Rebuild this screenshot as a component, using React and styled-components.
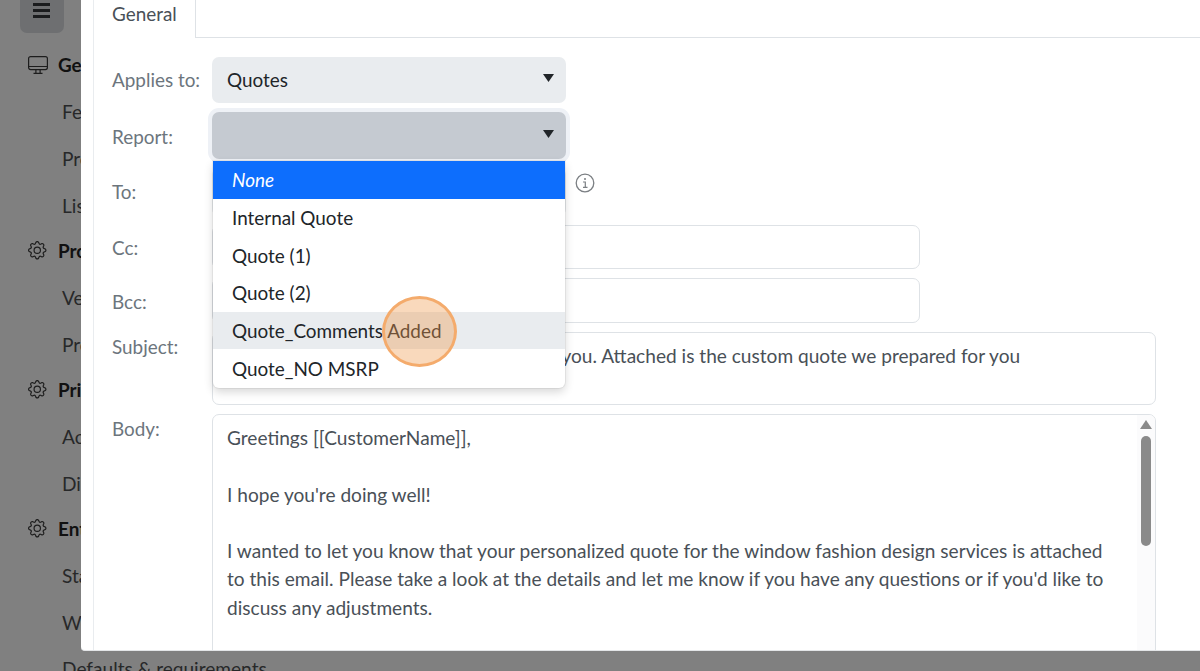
import React from 'react';
import styled, { createGlobalStyle } from 'styled-components';

const Global = createGlobalStyle`
  html, body { margin: 0; padding: 0; height: 671px; overflow: hidden; background: #808080; }
  * { box-sizing: border-box; }
  body { font-family: "Lato", "Open Sans", sans-serif; font-size: 18.9px; line-height: 1; }
`;

const Page = styled.div`
  position: relative;
  width: 1200px;
  height: 671px;
  overflow: hidden;
  background: #808080;
`;

const Sidebar = styled.nav`
  width: 303px;
  height: 671px;
  overflow: hidden;
  display: flex;
  flex-direction: column;
`;

const MenuButton = styled.div`
  width: 44px;
  height: 33px;
  margin-left: 20px;
  margin-bottom: 9px;
  flex: none;
  background: #6e6f71;
  border-radius: 0 0 7px 7px;
  display: flex;
  flex-direction: column;
  gap: 3px;
  padding: 3px 0 0 13px;
`;

const MenuBar = styled.span`
  width: 17px;
  height: 3px;
  background: #1b1c1e;
`;

const GroupRow = styled.div`
  height: 45px;
  flex: none;
  display: flex;
  align-items: center;
  gap: 10px;
  padding: 1px 0 0 28px;
  font-weight: 700;
  color: #111;
  white-space: nowrap;
`;

const IconSlot = styled.span`
  width: 20px;
  height: 20px;
  margin-top: -1px;
  flex: none;
  display: flex;
  align-items: center;
  justify-content: flex-start;
`;

const SubRow = styled.div`
  height: ${p => p.$h || 47}px;
  flex: none;
  display: flex;
  align-items: center;
  padding: 3px 0 0 62px;
  font-size: 19.1px;
  color: #272829;
  white-space: nowrap;
`;

const Modal = styled.section`
  position: absolute;
  left: 81px;
  top: 0;
  width: 1119px;
  height: 651px;
  background: #fff;
  border-radius: 0 0 0 4px;
  padding-left: 12px;
  overflow: hidden;
  border-bottom: 1px solid #e3e5e7;
`;

const Panel = styled.div`
  height: 100%;
  border-left: 1px solid #e9ecef;
  display: flex;
  flex-direction: column;
`;

const TabStrip = styled.div`
  height: 38px;
  flex: none;
  border-bottom: 1px solid #dee2e6;
`;

const Tab = styled.div`
  width: 102px;
  height: 38px;
  background: #fff;
  border-right: 1px solid #dee2e6;
  padding: 4px 0 0 18px;
  color: #495057;
  line-height: 19px;
`;

const Form = styled.div`
  flex: 1;
  min-height: 0;
  padding: 19px 0 0 18px;
  display: flex;
  flex-direction: column;
  gap: 9px;
`;

const Row = styled.div`
  display: flex;
  flex: none;
  height: ${p => p.$h}px;
  align-items: ${p => (p.$top ? 'flex-start' : 'center')};
`;

const BodyRow = styled(Row)`
  flex: 1;
  height: auto;
  min-height: 0;
`;

const Label = styled.label`
  width: 100px;
  flex: none;
  color: #6c757d;
  line-height: 22px;
  padding-top: ${p => p.$pt || 0}px;
`;

const SelectBox = styled.div`
  position: relative;
  width: 354px;
  height: 100%;
  display: flex;
  align-items: center;
  padding-left: 15px;
  background: ${p => (p.$open ? '#c5cad1' : '#e9ecef')};
  border-radius: 7px;
  color: #212529;
  box-shadow: ${p => (p.$open ? '0 0 0 4px #eef1f6' : 'none')};
`;

const Caret = styled.svg`
  position: absolute;
  right: 12px;
  top: 50%;
  margin-top: -6px;
  width: 11px;
  height: 8px;
  fill: #212529;
`;

const Dropdown = styled.ul`
  position: absolute;
  left: 1px;
  right: 1px;
  top: 49px;
  margin: 0;
  padding: 0 0 1px;
  list-style: none;
  background: #fff;
  border-radius: 0 0 6px 6px;
  box-shadow: 0 4px 10px rgba(0, 0, 0, 0.16), 0 0 0 1px rgba(0, 0, 0, 0.05);
  z-index: 2;
  overflow: hidden;
`;

const Option = styled.li`
  height: 37.7px;
  display: flex;
  align-items: center;
  padding: 2px 0 0 19px;
  white-space: nowrap;
  color: ${p => (p.$selected ? '#fff' : '#212529')};
  background: ${p => (p.$selected ? '#0d6efd' : p.$hover ? '#e9ecef' : 'transparent')};
  font-style: ${p => (p.$selected ? 'italic' : 'normal')};
`;

const InfoIcon = styled.svg`
  width: 20px;
  height: 20px;
  margin: -18px 0 0 9px;
  flex: none;
  color: #7b7f83;
`;

const TextInput = styled.div`
  width: 708px;
  height: 100%;
  background: #fff;
  border: 1px solid #dee2e6;
  border-radius: 7px;
`;

const TextArea = styled.div`
  position: relative;
  width: 944px;
  height: ${p => (p.$fill ? '260px' : '100%')};
  background: #fff;
  border: 1px solid #dee2e6;
  border-radius: 7px;
  padding: 9px 14px;
  color: #495057;
  font-size: 19.1px;
  line-height: 28.3px;
  overflow: hidden;
  white-space: pre-line;
`;

const Track = styled.div`
  position: absolute;
  top: 0;
  right: 0;
  bottom: 0;
  width: 18px;
  background: #fbfbfc;
`;

const ThumbArrow = styled.div`
  position: absolute;
  left: 3px;
  top: 5px;
  width: 0;
  height: 0;
  border-left: 6px solid transparent;
  border-right: 6px solid transparent;
  border-bottom: 9px solid #8a8a8a;
`;

const Thumb = styled.div`
  position: absolute;
  left: 4px;
  top: 21px;
  width: 10px;
  height: 110px;
  background: #8a8a8a;
  border-radius: 5px;
`;

const Spotlight = styled.div`
  position: absolute;
  left: 382px;
  top: 296px;
  width: 75px;
  height: 71px;
  border-radius: 50%;
  border: 3px solid #f4ab6c;
  background: rgba(240, 154, 80, 0.38);
  z-index: 3;
`;

const Gear = () => (
  <svg width="18.500" height="18.500" viewBox="0 0 16 16" fill="#1d1d1d">
    <path d="M8 4.754a3.246 3.246 0 1 0 0 6.492 3.246 3.246 0 0 0 0-6.492zM5.754 8a2.246 2.246 0 1 1 4.492 0 2.246 2.246 0 0 1-4.492 0z" />
    <path d="M9.796 1.343c-.527-1.79-3.065-1.79-3.592 0l-.094.319a.873.873 0 0 1-1.255.52l-.292-.16c-1.64-.892-3.433.902-2.54 2.541l.159.292a.873.873 0 0 1-.52 1.255l-.319.094c-1.79.527-1.79 3.065 0 3.592l.319.094a.873.873 0 0 1 .52 1.255l-.16.292c-.892 1.64.901 3.434 2.541 2.54l.292-.159a.873.873 0 0 1 1.255.52l.094.319c.527 1.79 3.065 1.79 3.592 0l.094-.319a.873.873 0 0 1 1.255-.52l.292.16c1.64.893 3.434-.902 2.54-2.541l-.159-.292a.873.873 0 0 1 .52-1.255l.319-.094c1.79-.527 1.79-3.065 0-3.592l-.319-.094a.873.873 0 0 1-.52-1.255l.16-.292c.893-1.64-.902-3.433-2.541-2.54l-.292.159a.873.873 0 0 1-1.255-.52l-.094-.319zm-2.633.283c.246-.835 1.428-.835 1.674 0l.094.319a1.873 1.873 0 0 0 2.693 1.115l.291-.16c.764-.415 1.6.42 1.184 1.185l-.159.292a1.873 1.873 0 0 0 1.116 2.692l.318.094c.835.246.835 1.428 0 1.674l-.319.094a1.873 1.873 0 0 0-1.115 2.693l.16.291c.415.764-.42 1.6-1.185 1.184l-.291-.159a1.873 1.873 0 0 0-2.693 1.116l-.094.318c-.246.835-1.428.835-1.674 0l-.094-.319a1.873 1.873 0 0 0-2.692-1.115l-.292.16c-.764.415-1.6-.42-1.184-1.185l.159-.291A1.873 1.873 0 0 0 1.945 8.930l-.319-.094c-.835-.246-.835-1.428 0-1.674l.319-.094A1.873 1.873 0 0 0 3.060 4.377l-.16-.292c-.415-.764.42-1.600 1.185-1.184l.292.159a1.873 1.873 0 0 0 2.692-1.115l.094-.319z" />
  </svg>
);

const Monitor = () => (
  <svg width="20" height="18" viewBox="0 0 20 18" fill="none" stroke="#1d1d1d" strokeWidth="1.200">
    <rect x="0.600" y="0.600" width="18.800" height="13" rx="2" />
    <path d="M0.600 10.500h18.800M7.900 13.600v3.600M12.100 13.600v3.600M5.500 17.300h9" />
  </svg>
);

const CaretIcon = () => (
  <Caret viewBox="0 0 11 8"><path d="M0 0h11L5.500 8z" /></Caret>
);

const options = ['None', 'Internal Quote', 'Quote (1)', 'Quote (2)', 'Quote_Comments Added', 'Quote_NO MSRP'];

const body = `Greetings [[CustomerName]],

I hope you're doing well!

I wanted to let you know that your personalized quote for the window fashion design services is attached
to this email. Please take a look at the details and let me know if you have any questions or if you'd like to
discuss any adjustments.`;

export default function App() {
  return (
    <Page>
      <Global />
      <Sidebar>
        <MenuButton><MenuBar /><MenuBar /><MenuBar /></MenuButton>
        <GroupRow><IconSlot><Monitor /></IconSlot>General</GroupRow>
        <SubRow>Features</SubRow>
        <SubRow>Products</SubRow>
        <SubRow>Lists</SubRow>
        <GroupRow><IconSlot><Gear /></IconSlot>Products</GroupRow>
        <SubRow>Vendors</SubRow>
        <SubRow>Products</SubRow>
        <GroupRow><IconSlot><Gear /></IconSlot>Pricing</GroupRow>
        <SubRow>Accessories</SubRow>
        <SubRow>Discounts</SubRow>
        <GroupRow><IconSlot><Gear /></IconSlot>Entities</GroupRow>
        <SubRow>Statuses</SubRow>
        <SubRow>Workflows</SubRow>
        <SubRow $h={44}>Defaults &amp; requirements</SubRow>
      </Sidebar>
      <Modal>
        <Panel>
          <TabStrip><Tab>General</Tab></TabStrip>
          <Form>
            <Row $h={46}>
              <Label>Applies to:</Label>
              <SelectBox>Quotes<CaretIcon /></SelectBox>
            </Row>
            <Row $h={47}>
              <Label $pt={2}>Report:</Label>
              <SelectBox $open>
                <CaretIcon />
                <Dropdown>
                  {options.map((o, i) => (
                    <Option key={o} $selected={i === 0} $hover={i === 4}>{o}</Option>
                  ))}
                </Dropdown>
              </SelectBox>
            </Row>
            <Row $h={48}>
              <Label>To:</Label>
              <SelectBox />
              <InfoIcon viewBox="0 0 20 20" fill="none" stroke="currentColor">
                <circle cx="10" cy="10" r="8.800" strokeWidth="1.300" />
                <circle cx="10" cy="6" r="1" fill="currentColor" stroke="none" />
                <path d="M8 9h2.300v5M8 14.300h4.500" strokeWidth="1.200" />
              </InfoIcon>
            </Row>
            <Row $h={44}>
              <Label $pt={2}>Cc:</Label>
              <TextInput />
            </Row>
            <Row $h={45}>
              <Label $pt={2}>Bcc:</Label>
              <TextInput />
            </Row>
            <Row $h={73} $top>
              <Label $pt={4}>Subject:</Label>
              <TextArea>Hello, [[CustomerName]], we say: thank you. Attached is the custom quote we prepared for you</TextArea>
            </Row>
            <BodyRow $top>
              <Label $pt={4}>Body:</Label>
              <TextArea $fill>
                {body}
                <Track><ThumbArrow /><Thumb /></Track>
              </TextArea>
            </BodyRow>
          </Form>
        </Panel>
      </Modal>
      <Spotlight />
    </Page>
  );
}
